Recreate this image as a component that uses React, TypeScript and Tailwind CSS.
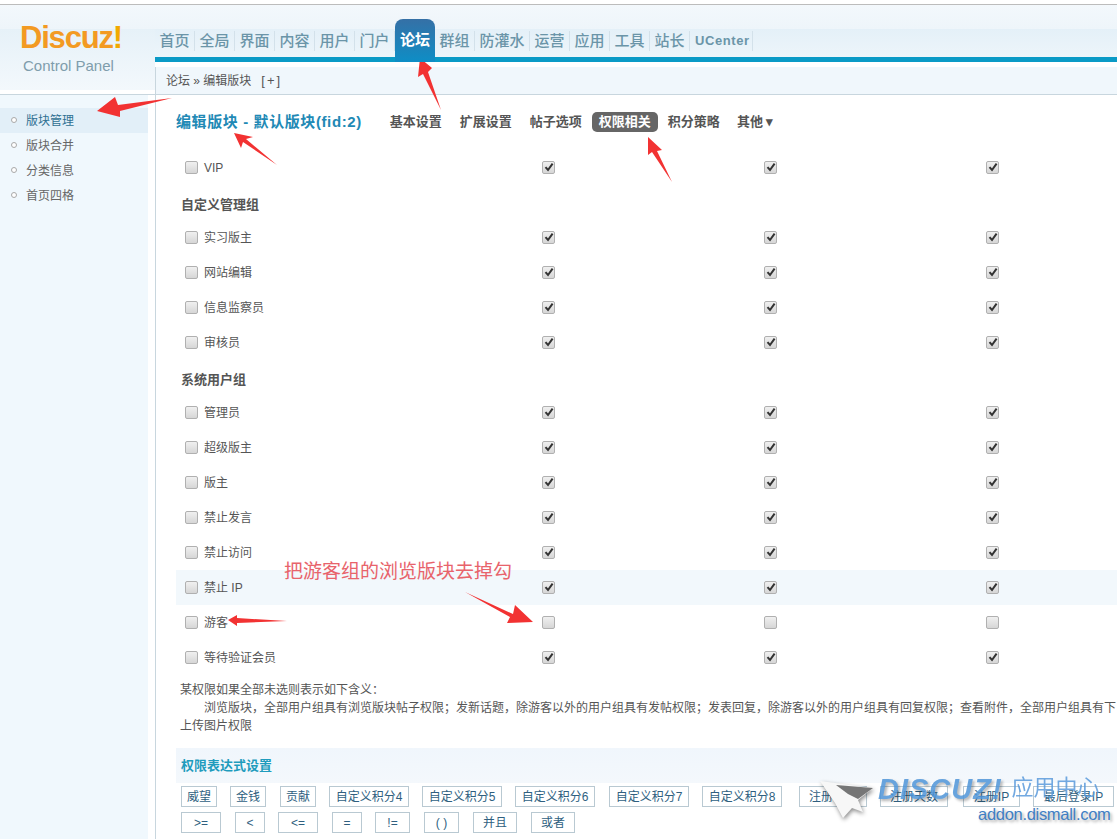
const navItems = [
  { label: "首页", width: "w-10" },
  { label: "全局", width: "w-10" },
  { label: "界面", width: "w-10" },
  { label: "内容", width: "w-10" },
  { label: "用户", width: "w-10" },
  { label: "门户", width: "w-10" },
  { label: "论坛", width: "w-10", active: true },
  { label: "群组", width: "w-10" },
  { label: "防灌水", width: "w-[55px]" },
  { label: "运营", width: "w-10" },
  { label: "应用", width: "w-10" },
  { label: "工具", width: "w-10" },
  { label: "站长", width: "w-10" },
];

const sideItems = ["版块管理", "版块合并", "分类信息", "首页四格"];

const tabs = [
  { label: "基本设置", className: "ml-[28px]" },
  { label: "扩展设置", className: "ml-[18px]" },
  { label: "帖子选项", className: "ml-[18px]" },
  { label: "权限相关", className: "ml-[10px] bg-[#666] text-white rounded-[5px] px-[7px]" },
  { label: "积分策略", className: "ml-[10px]" },
  { label: "其他 ▾", className: "ml-[17px]" },
];

type Row =
  | { title: string }
  | { name: string; off?: boolean; tint?: boolean };

const rows: Row[] = [
  { name: "VIP" },
  { title: "自定义管理组" },
  { name: "实习版主" },
  { name: "网站编辑" },
  { name: "信息监察员" },
  { name: "审核员" },
  { title: "系统用户组" },
  { name: "管理员" },
  { name: "超级版主" },
  { name: "版主" },
  { name: "禁止发言" },
  { name: "禁止访问" },
  { name: "禁止 IP", tint: true },
  { name: "游客", off: true },
  { name: "等待验证会员" },
];

const exprRow1 = [
  { label: "威望", className: "w-[36px]" },
  { label: "金钱", className: "w-[36px] ml-[13px]" },
  { label: "贡献", className: "w-[36px] ml-[14px]" },
  { label: "自定义积分4", className: "w-[80px] ml-[13px]" },
  { label: "自定义积分5", className: "w-[80px] ml-[13px]" },
  { label: "自定义积分6", className: "w-[80px] ml-[13px]" },
  { label: "自定义积分7", className: "w-[80px] ml-[14px]" },
  { label: "自定义积分8", className: "w-[80px] ml-[13px]" },
  { label: "注册时间", className: "w-[68px] ml-[17px]" },
  { label: "注册天数", className: "w-[68px] ml-[13px]" },
  { label: "注册IP", className: "w-[57px] ml-[15px]" },
  { label: "最后登录IP", className: "w-[81px] ml-[13px]" },
];

const exprRow2 = [
  { label: ">=", className: "w-[40px]" },
  { label: "<", className: "w-[30px] ml-[14px]" },
  { label: "<=", className: "w-[40px] ml-[13px]" },
  { label: "=", className: "w-[30px] ml-[14px]" },
  { label: "!=", className: "w-[35px] ml-[13px]" },
  { label: "( )", className: "w-[35px] ml-[14px]" },
  { label: "并且", className: "w-[44px] ml-[14px]" },
  { label: "或者", className: "w-[44px] ml-[14px]" },
];

const CheckBox = ({ checked }: { checked: boolean }) => (
  <span className="flex h-[13px] w-[13px] items-center justify-center rounded-[2px] border border-[#b0b0b0] bg-[linear-gradient(#f0f0f0,#d6d6d6)]">
    {checked && (
      <svg width="10" height="10" viewBox="0 0 10 10">
        <path d="M1.5 5.2 L4 8 L8.6 1.6" fill="none" stroke="#333" strokeWidth="2" />
      </svg>
    )}
  </span>
);

const ExprButton = ({ label, className }: { label: string; className: string }) => (
  <span
    className={`flex h-[21px] items-center justify-center border border-[#b9c9d2] bg-white text-[#2f5f7f] ${className}`}
  >
    {label}
  </span>
);

const Overlay = () => (
  <svg
    className="pointer-events-none absolute left-0 top-0"
    width="1117"
    height="839"
    viewBox="0 0 1117 839"
  >
    <g fill="#f23232">
      <polygon points="172,98 118,105 115,97 97,111 120,117 120,111" />
      <polygon points="277,165 246,139 253,137 234,133 241,148 243,142" />
      <polygon points="441,110 428,72 432,68 420,58 418,77 423,74" />
      <polygon points="672,182 657,151 662,150 648,137 648,155 652,152" />
      <polygon points="465,592 513,614 515,605 533,622 507,623 510,617" />
      <polygon points="287,621 237,618 237,615 228,620 237,626 237,623" />
    </g>
    {/* watermark plane */}
    <g className="drop-shadow-[1px_2px_2px_rgba(0,0,0,0.45)]">
      <polygon points="820,781 873,788 858,800 863,812 852,808 843,818 835,803" fill="#f7f7f7" />
      <polygon points="836,785 873,788 858,799 848,794" fill="#555" opacity="0.8" />
    </g>
  </svg>
);

const Watermark = () => (
  <div className="pointer-events-none absolute left-[878px] top-[777px] w-[235px]">
    <div className="flex h-[26px] items-center">
      <span className="font-['Liberation_Sans'] text-[29px] font-bold italic tracking-[1px] text-[#4f95d8] opacity-85 [text-shadow:2px_2px_3px_rgba(0,0,0,0.35)]">
        DISCUZ!
      </span>
      <span className="ml-[9px] -mt-[4px] text-[22px] leading-none text-[#5b9bdc] opacity-85">应用中心</span>
    </div>
    <div className="ml-[100px] mt-[1px] whitespace-nowrap font-['Liberation_Sans'] text-[16.5px] leading-[20px] tracking-[-0.3px] text-[#3f7fc4] [text-shadow:2px_2px_3px_rgba(0,0,0,0.35)]">
      addon.dismall.com
    </div>
  </div>
);

export default function App() {
  return (
    <div className="relative h-[839px] w-[1117px] overflow-hidden bg-white font-['Liberation_Sans','Noto_Sans_CJK_SC',sans-serif] text-[12px] text-[#555]">
      <div className="h-[5px] border-b border-[#bcbcbc]" />

      {/* header */}
      <div className="flex h-[90px] border-b border-[#c8d6de]">
        <div className="h-[85px] w-[155px] shrink-0 bg-[linear-gradient(#f3f8fc,#eef5fa_24px,#e6f1f8_24px,#f3f8fc)] pl-[20px] pt-[15px]">
          <div className="font-['Liberation_Sans'] text-[31px] font-bold leading-[36px] tracking-[-1.2px] text-[#f39a22]">
            Discuz<span className="text-[#f2a900]">!</span>
          </div>
          <div className="ml-[3px] mt-[1px] font-['Liberation_Sans'] text-[15px] leading-[17px] text-[#7f9dac]">
            Control Panel
          </div>
        </div>
        <div className="min-w-0 flex-1">
          <div className="flex h-[52px] items-end bg-[linear-gradient(#f3f8fc,#eef5fa_24px,#e4f0f8_24px,#edf5fa)]">
            {navItems.map((item) =>
              item.active ? (
                <div
                  key={item.label}
                  className="relative z-10 -mb-[5px] flex h-[43px] w-10 items-center justify-center rounded-t-[8px] bg-[linear-gradient(#3570a6,#0e8ec6)] pb-[1px] text-[15px] font-bold text-white"
                >
                  {item.label}
                </div>
              ) : (
                <div key={item.label} className={`flex h-[38px] items-center justify-center pt-[6px] ${item.width}`}>
                  <span className="w-full border-r border-[#d3e1ea] text-center text-[15px] font-medium leading-[20px] text-[#6b95a8]">
                    {item.label}
                  </span>
                </div>
              ),
            )}
            <div className="flex h-[38px] items-center pl-[5px] pt-[5px]">
              <span className="border-r border-[#d3e1ea] pr-[2px] font-['Liberation_Sans'] text-[13px] font-bold leading-[20px] tracking-[0.6px] text-[#6b95a8]">
                UCenter
              </span>
            </div>
          </div>
          <div className="h-[5px] bg-[#0a9ac6]" />
          <div className="mt-[5px] flex h-[27px] items-center border-l border-[#c8d6de] bg-[#f0f7fc] pl-[10px] text-[#555]">
            论坛 » 编辑版块
            <span className="ml-[10px] text-[13px] tracking-[2px]">[+]</span>
          </div>
        </div>
      </div>

      {/* body */}
      <div className="flex h-[744px]">
        <div className="w-[155px] shrink-0">
          <div className="h-full w-[148px] bg-[#f0f8fd] pt-[14px]">
            {sideItems.map((item, i) => (
              <div
                key={item}
                className={`flex h-[25px] items-center pl-[11px] ${i === 0 ? "-mt-px bg-[#e2eff8] text-[#2f6f92]" : "text-[#666]"}`}
              >
                <span className="mb-[2px] h-[6px] w-[6px] rounded-full border border-[#a9a9a9] bg-white" />
                <span className="ml-[9px]">{item}</span>
              </div>
            ))}
          </div>
        </div>

        <div className="min-w-0 flex-1 border-l border-[#c8d6de] pl-5 pt-[17px]">
          <div className="flex h-[20px] items-center whitespace-nowrap text-[13px] font-bold">
            <span className="text-[15px] tracking-[0.6px] text-[#2189b5]">编辑版块 - 默认版块(fid:2)</span>
            {tabs.map((tab) => (
              <span key={tab.label} className={`flex h-[20px] items-center ${tab.className}`}>
                {tab.label}
              </span>
            ))}
          </div>

          <div className="mt-[18px] w-[1100px]">
            {rows.map((row) =>
              "title" in row ? (
                <div key={row.title} className="flex h-[35px] items-center pl-[5px] pt-1 text-[13px] font-bold text-[#555]">
                  {row.title}
                </div>
              ) : (
                <div
                  key={row.name}
                  className={`grid h-[35px] grid-cols-[366px_222px_222px_222px] items-center pb-[1px] ${row.tint ? "bg-[#f2f8fc]" : ""}`}
                >
                  <div className="flex items-center pl-[9px]">
                    <CheckBox checked={false} />
                    <span className="ml-[6px] mt-[2px]">{row.name}</span>
                  </div>
                  {[0, 1, 2].map((col) => (
                    <div key={col}>
                      <CheckBox checked={!row.off} />
                    </div>
                  ))}
                </div>
              ),
            )}
          </div>

          <div className="mt-[6px] w-[1100px] whitespace-nowrap pl-[4px] leading-[18px]">
            <div>某权限如果全部未选则表示如下含义：</div>
            <div className="pl-[24px]">
              浏览版块，全部用户组具有浏览版块帖子权限；发新话题，除游客以外的用户组具有发帖权限；发表回复，除游客以外的用户组具有回复权限；查看附件，全部用户组具有下
            </div>
            <div>上传图片权限</div>
          </div>

          <div className="mt-[13px] flex h-[35px] w-[1100px] items-center bg-[linear-gradient(#f0f6fc,#f4f8fc)] pl-[5px] pt-px text-[13px] font-bold text-[#1f9cbd]">
            权限表达式设置
          </div>
          <div className="mt-[3px] flex w-[1100px] pl-[5px] whitespace-nowrap">
            {exprRow1.map((b) => (
              <ExprButton key={b.label} label={b.label} className={b.className} />
            ))}
          </div>
          <div className="mt-[5px] flex w-[1100px] pl-[5px]">
            {exprRow2.map((b) => (
              <ExprButton key={b.label} label={b.label} className={b.className} />
            ))}
          </div>
        </div>
      </div>

      <div className="absolute left-[284px] top-[558px] text-[19px] leading-[28px] text-[#e8636b]">
        把游客组的浏览版块去掉勾
      </div>
      <Overlay />
      <Watermark />
    </div>
  );
}
